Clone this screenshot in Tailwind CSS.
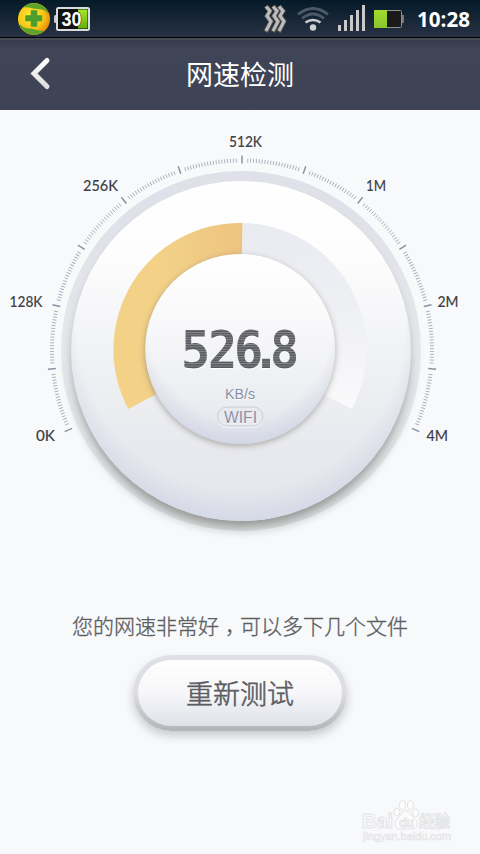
<!DOCTYPE html>
<html lang="zh">
<head>
<meta charset="utf-8">
<title>网速检测</title>
<script src="https://cdn.jsdelivr.net/npm/@tailwindcss/browser@4"></script>
</head>
<body class="w-[480px] h-[854px] overflow-hidden bg-[#f8f9fb] font-['Noto_Sans','Noto_Sans_CJK_SC',sans-serif] flex flex-col relative">
<!-- status bar -->
<div class="h-[38px] shrink-0 bg-linear-to-b from-[#051a28] to-[#273244] border-b border-black">
<svg class="block w-[480px] h-[37px]" viewBox="0 0 480 37">
  <defs>
    <radialGradient id="ball" cx=".4" cy=".4" r=".65"><stop offset="0" stop-color="#ffe93a"/><stop offset=".6" stop-color="#fbc714"/><stop offset="1" stop-color="#e58a0a"/></radialGradient>
    <linearGradient id="grn" x1="0" y1="0" x2="0" y2="1"><stop offset="0" stop-color="#a4e82c"/><stop offset="1" stop-color="#5fae08"/></linearGradient>
    <linearGradient id="grn2" x1="0" y1="0" x2="0" y2="1"><stop offset="0" stop-color="#a0dc2c"/><stop offset="1" stop-color="#8cc62e"/></linearGradient>
  </defs>
  <circle cx="34" cy="19" r="16" fill="url(#ball)"/>
  <path d="M23 7.500C30 1 42 2 47.500 11C48.500 13 48.500 14 47 12.500C43 7.500 37 10 32 8.200C29 7 26 7 23 7.500Z" fill="#5da52a"/>
  <path d="M45 30.500C38 37 26 36 20.500 27C19.500 25 19.500 23.500 21.500 25.500C26 30 31 27.500 36 29.800C39 31 42 31 45 30.500Z" fill="#5da52a"/>
  <path d="M31.500 11h5v5h5v4.500h-5v5.500h-5v-5.500h-5.500v-4.500h5.500z" fill="#4b9f2c" stroke="#4b9f2c" stroke-width="1.500" stroke-linejoin="round"/>
  <rect x="54" y="15" width="4" height="8" rx="1.500" fill="#c8ccd0"/>
  <rect x="57" y="8" width="32" height="22" rx="1.500" fill="#101214" stroke="#d9dcdf" stroke-width="2"/>
  <rect x="78" y="9.500" width="9.500" height="19" fill="url(#grn)"/>
  <text x="61.500" y="25.800" textLength="20" lengthAdjust="spacingAndGlyphs" font-family="Liberation Sans" font-weight="bold" font-size="20" fill="#fff" stroke="#111" stroke-width="1" paint-order="stroke">30</text>
  <g fill="none" stroke="#4b4b4b" stroke-width="5"><path d="M266 6l4 5-3 5 4 5.500-5.500 10.500"/><path d="M273 6l4 5-3 5 4 5.500-5.500 10.500"/><path d="M279 6l4 5-3 5 4 5.500-5.500 10.500"/></g>
  <g fill="none" stroke="#bcbcbc" stroke-width="3.200"><path d="M266 6.500l4 4.500-3 5 4 5.500-5 9.500"/><path d="M273 6.500l4 4.500-3 5 4 5.500-5 9.500"/><path d="M279 6.500l4 4.500-3 5 4 5.500-5 9.500"/></g>
  <circle cx="313" cy="27.500" r="3.200" fill="#cfcfcf"/>
  <g fill="none" stroke-width="2.700"><path d="M305.500 22.500Q313 17.500 320.500 22.500" stroke="#cfcfcf"/><path d="M302 18.500Q313 9.500 324 18.500M298 14.500Q313 2.500 328 14.500" stroke="#4d5a66"/></g>
  <path d="M338 25h3v6h-3zM344 20h3v11h-3zM350 15h3v16h-3zM356 10h3v21h-3zM362 5h3v26h-3z" fill="#c9c9c9"/>
  <rect x="374.500" y="10.500" width="27" height="17" rx="1" fill="#1a1a1a" stroke="#929292"/>
  <rect x="402" y="15" width="2" height="8" fill="#777"/>
  <rect x="374" y="10" width="13" height="18" fill="url(#grn2)"/>
  <text x="417" y="27" textLength="53" lengthAdjust="spacingAndGlyphs" font-family="Open Sans" font-weight="bold" font-size="20.500" fill="#fff">10:28</text>
</svg>
</div>
<!-- title bar -->
<header class="h-[72px] shrink-0 flex items-center justify-center relative border-t-2 border-[#474a55] bg-linear-to-b from-[#363a4b] via-[#3f4457] via-12% to-[#3e4355]">
  <svg class="absolute left-[28px] top-[16px] w-6 h-9" viewBox="0 0 24 36"><defs><linearGradient id="ar" x1="0" y1="0" x2="0" y2="1"><stop stop-color="#fff"/><stop offset="1" stop-color="#dedede"/></linearGradient></defs><path d="M19 4.500L6 17.500L19 30.500" fill="none" stroke="url(#ar)" stroke-width="5" stroke-linecap="round"/></svg>
  <h1 class="pb-[2px] text-[27px] leading-9 text-white font-['Noto_Sans_CJK_SC',sans-serif]">网速检测</h1>
</header>
<!-- speed dial -->
<svg class="block w-[480px] h-[490px] shrink-0" viewBox="0 110 480 490">
  <defs>
    <linearGradient id="disc" x1="0" y1="0" x2="0" y2="1"><stop offset="0" stop-color="#fff"/><stop offset=".22" stop-color="#fdfdfd"/><stop offset=".5" stop-color="#f1f2f5"/><stop offset=".8" stop-color="#e8e9ee"/><stop offset="1" stop-color="#e6e7eb"/></linearGradient>
    <radialGradient id="edge" gradientUnits="userSpaceOnUse" cx="241" cy="326" r="195"><stop offset=".84" stop-color="#d3d7e6" stop-opacity="0"/><stop offset="1" stop-color="#d3d7e6" stop-opacity=".9"/></radialGradient>
    <radialGradient id="edge2" gradientUnits="userSpaceOnUse" cx="240" cy="325" r="119"><stop offset=".78" stop-color="#d0d4e3" stop-opacity="0"/><stop offset="1" stop-color="#d0d4e3" stop-opacity=".85"/></radialGradient>
    <linearGradient id="ring" x1="0" y1="0" x2="0" y2="1"><stop offset="0" stop-color="#dfe0e8"/><stop offset=".5" stop-color="#e5e7eb"/><stop offset="1" stop-color="#dcdddf"/></linearGradient>
    <linearGradient id="gold" gradientUnits="userSpaceOnUse" x1="160" y1="0" x2="242" y2="0"><stop stop-color="#f3d288"/><stop offset="1" stop-color="#edc381"/></linearGradient>
    <linearGradient id="track" gradientUnits="userSpaceOnUse" x1="0" y1="224" x2="0" y2="409"><stop stop-color="#e9ebf0"/><stop offset=".5" stop-color="#eff0f4"/><stop offset="1" stop-color="#fafafb"/></linearGradient>
    <linearGradient id="knob" x1="0" y1="0" x2="0" y2="1"><stop stop-color="#fff"/><stop offset=".3" stop-color="#fafafb"/><stop offset="1" stop-color="#e5e7ed"/></linearGradient>
    <pattern id="stripe" width="4" height="2.400" patternUnits="userSpaceOnUse"><rect width="4" height="2.400" fill="#56585d"/><rect width="4" height=".9" fill="#8a8c91"/></pattern>
    <filter id="b7" x="-20%" y="-20%" width="140%" height="140%"><feGaussianBlur stdDeviation="5"/></filter>
    <filter id="b4" x="-20%" y="-20%" width="140%" height="140%"><feGaussianBlur stdDeviation="3"/></filter>
    <clipPath id="ringclip"><circle cx="241" cy="351" r="180"/></clipPath>
  </defs>
  <circle cx="241" cy="358" r="176" fill="#a9aba8" opacity=".35" filter="url(#b4)"/>
  <circle cx="241" cy="351" r="180" fill="url(#ring)"/>
  <g clip-path="url(#ringclip)"><circle cx="241" cy="359" r="168" fill="#858785" opacity=".8" filter="url(#b7)"/></g>
  <circle cx="241" cy="351" r="170" fill="url(#disc)"/>
  <circle cx="241" cy="351" r="170" fill="url(#edge)"/>
  <path d="M240 349.500L242.500 223A126.500 126.500 0 0 1 351.700 409Z" fill="url(#track)"/>
  <path d="M240 349.500L128.300 409A126.500 126.500 0 0 1 242.500 223Z" fill="url(#gold)"/>
  <circle cx="240" cy="351" r="95" fill="#6d665c" opacity=".5" filter="url(#b4)"/>
  <circle cx="240.200" cy="349" r="95" fill="url(#knob)"/>
  <circle cx="240.200" cy="349" r="95" fill="url(#edge2)"/>
  <g id="ticks" stroke="#8d91a5"></g>
  <g font-family="Lato" font-weight="500" font-size="15.500" fill="#3f4146" stroke="#3f4146" stroke-width=".1">
    <text x="36" y="441" textLength="19" lengthAdjust="spacingAndGlyphs">0K</text>
    <text x="9.500" y="307" textLength="33" lengthAdjust="spacingAndGlyphs">128K</text>
    <text x="83" y="191" textLength="35" lengthAdjust="spacingAndGlyphs">256K</text>
    <text x="229" y="147" textLength="33" lengthAdjust="spacingAndGlyphs">512K</text>
    <text x="366" y="191" textLength="20" lengthAdjust="spacingAndGlyphs">1M</text>
    <text x="437.500" y="307" textLength="21" lengthAdjust="spacingAndGlyphs">2M</text>
    <text x="426.500" y="441" textLength="21.500" lengthAdjust="spacingAndGlyphs">4M</text>
  </g>
  <g font-family="DejaVu Sans Mono" font-weight="bold" font-size="51" text-anchor="middle">
    <text transform="translate(0 369.200) scale(.95 1)" x="205.800 234.200 261.600 280 299.500" y="0" fill="#fff">526.8</text>
    <text transform="translate(0 368) scale(.95 1)" x="205.800 234.200 261.600 280 299.500" y="0" fill="url(#stripe)">526.8</text>
  </g>
  <g font-family="Liberation Sans" fill="#8a8fa6">
    <text x="225" y="400" font-size="15" textLength="30" lengthAdjust="spacingAndGlyphs" fill="#fff">KB/s</text>
    <text x="225" y="399" font-size="15" textLength="30" lengthAdjust="spacingAndGlyphs">KB/s</text>
    <rect x="217.500" y="408" width="45.500" height="19" rx="9.500" fill="none" stroke="#fff"/>
    <rect x="217.500" y="407" width="45.500" height="19" rx="9.500" fill="#e8eaf0" stroke="#c8cad4"/>
    <text x="224" y="423.500" font-size="16.500" textLength="33" lengthAdjust="spacingAndGlyphs" fill="#fff">WIFI</text>
    <text x="224" y="422.500" font-size="16.500" textLength="33" lengthAdjust="spacingAndGlyphs">WIFI</text>
  </g>
</svg>
<!-- result and retry -->
<main class="flex flex-col items-center pt-[9px]">
  <p class="h-8 text-[21px] leading-8 text-[#5c5e62] font-light [-webkit-text-stroke:0.35px_#5c5e62] whitespace-nowrap font-['Noto_Sans_CJK_SC',sans-serif]">您的网速非常好<span lang="zh-TW" class="relative top-[6px] font-['Noto_Sans_CJK_TC',sans-serif]">，</span>可以多下几个文件</p>
  <button class="mt-[14px] w-[214px] h-[76px] rounded-[38px] p-[5px] bg-linear-to-b from-[#dfe0e8] via-[#dddee3] to-[#b3b4b5] shadow-[0_5px_8px_rgba(100,100,100,0.3)]">
    <span class="flex h-full items-center justify-center rounded-[33px] bg-linear-to-b from-white via-[#f7f7f9] to-[#dfe1e8] pt-[1px] text-[27px] text-[#5c5e63] font-light [-webkit-text-stroke:0.6px_#5c5e63] font-['Noto_Sans_CJK_SC',sans-serif]">重新测试</span>
  </button>
</main>
<!-- watermark -->
<svg class="absolute left-[355px] top-[795px] w-[105px] h-[52px]" viewBox="355 795 105 52">
  <g fill="#fcfcfd" stroke="#e3e4e6" stroke-width="1">
    <text x="362" y="828" font-family="Liberation Sans" font-weight="bold" font-size="20" textLength="31" lengthAdjust="spacingAndGlyphs">Bai</text>
    <ellipse cx="397" cy="812" rx="3" ry="4"/><ellipse cx="402.500" cy="805" rx="3" ry="4.500"/><ellipse cx="410.500" cy="805" rx="3" ry="4.500"/><ellipse cx="415.500" cy="813" rx="3" ry="4"/>
    <path d="M406 811C401 811 401 816 397.500 818.500C393 822 395 829.500 401 829H411C418 829.500 419 822 414.500 818.500C411 816 411 811 406 811Z"/>
    <text x="399" y="827" font-family="Liberation Sans" font-weight="bold" font-size="13" textLength="15">du</text>
    <text x="419" y="827" font-family="Noto Sans CJK SC" font-weight="bold" font-size="15.500" textLength="31">经验</text>
    <text x="363" y="840" font-family="Liberation Sans" font-size="11" stroke-width=".6" textLength="88">jingyan.baidu.com</text>
  </g>
</svg>
<script>
  // Scale marks: one major mark per 19.1 degrees, with fine marks between
  const g = document.getElementById('ticks');
  const mark = (deg, r1, r2, w, o) => {
    const l = document.createElementNS('http://www.w3.org/2000/svg', 'line');
    l.setAttribute('x1', 242); l.setAttribute('x2', 242);
    l.setAttribute('y1', 350.5 - r1); l.setAttribute('y2', 350.5 - r2);
    l.setAttribute('stroke-width', w); l.setAttribute('opacity', o);
    l.setAttribute('transform', `rotate(${deg} 242 350.5)`);
    g.appendChild(l);
  };
  for (let i = -6; i <= 6; i++) {
    mark(i * 19.1, 187, 195, 1.5, 1);
    if (i < 6) for (let k = 0; k < 19; k++) mark(i * 19.1 + 1.75 + k * 0.867, 188, 192, 0.9, 0.75);
  }
</script>
</body>
</html>
